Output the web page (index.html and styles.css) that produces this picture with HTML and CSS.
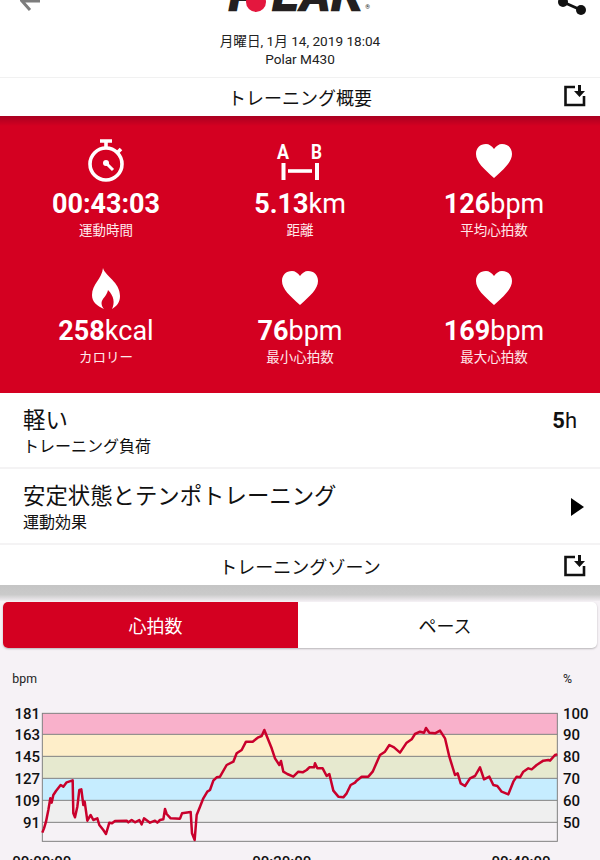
FILE: index.html
```html
<!DOCTYPE html>
<html>
<head>
    <meta charset="utf-8">
    <title>Polar Flow</title>
    <link rel="stylesheet" href="styles.css">
</head>
<body>
    <div class="topbar">
        <svg class="back" width="24" height="12" viewBox="0 0 24 12">
            <path d="M10 10 L2 1 H20" fill="none" stroke="#7d7d7d" stroke-width="3"/>
        </svg>
        <div class="logo">
            <span class="logo-text logo-p">P</span><span class="logo-dot"></span><span class="logo-text">LAR</span><span class="logo-reg">®</span>
        </div>
        <svg class="share" width="32" height="18" viewBox="0 0 32 18">
            <path d="M8 2 L26 10" stroke="#111" stroke-width="3"/>
            <circle cx="8" cy="2" r="5" fill="#111"/>
            <circle cx="26" cy="10" r="5" fill="#111"/>
        </svg>
    </div>

    <div class="meta">
        <p>月曜日, 1月 14, 2019 18:04</p>
        <p>Polar M430</p>
    </div>

    <div class="section-title">
        <span>トレーニング概要</span>
        <svg class="save" width="24" height="22" viewBox="0 0 24 22">
            <path d="M13 2 H3.500 V20 H22 V11" fill="none" stroke="#111" stroke-width="2.6"/>
            <path d="M16 0 H19 V6 H23 L17.500 12 L12 6 H16 Z" fill="#111"/>
        </svg>
    </div>

    <div class="stats">
        <div class="stat">
            <div class="stat-icon">
                <svg width="38" height="44" viewBox="0 0 38 44">
                    <circle cx="19" cy="25" r="16" fill="none" stroke="#fff" stroke-width="3.600"/>
                    <path d="M13 2 H25 M19 2 V9 M31 13 L34 10" stroke="#fff" stroke-width="3.600" fill="none"/>
                    <circle cx="19" cy="24" r="3" fill="#fff"/>
                    <path d="M19 24 L26 31" stroke="#fff" stroke-width="3"/>
                </svg>
            </div>
            <div class="stat-value"><b>00:43:03</b></div>
            <div class="stat-label">運動時間</div>
        </div>
        <div class="stat">
            <div class="stat-icon">
                <svg width="48" height="44" viewBox="0 0 48 44">
                    <text class="ab-text" x="1" y="20" textLength="12" lengthAdjust="spacingAndGlyphs">A</text>
                    <text class="ab-text" x="35" y="20" textLength="11" lengthAdjust="spacingAndGlyphs">B</text>
                    <path d="M7.500 24 V41 M41 24 V41" stroke="#fff" stroke-width="4"/>
                    <path d="M12 32 H36" stroke="#fff" stroke-width="3.600"/>
                </svg>
            </div>
            <div class="stat-value"><b>5.13</b>km</div>
            <div class="stat-label">距離</div>
        </div>
        <div class="stat">
            <div class="stat-icon">
                <svg class="heart" width="36" height="34" viewBox="0 0 36 34">
                    <path d="M18 34 C8 25 0 18 0 10 C0 4 4 0 10 0 C13 0 16 2 18 5 C20 2 23 0 26 0 C32 0 36 4 36 10 C36 18 28 25 18 34 Z" fill="#fff"/>
                </svg>
            </div>
            <div class="stat-value"><b>126</b>bpm</div>
            <div class="stat-label">平均心拍数</div>
        </div>
        <div class="stat">
            <div class="stat-icon">
                <svg width="28" height="41" viewBox="0 0 28 41">
                    <path d="M11 0 C13 8 28 14 28 28 C28 34 25 38 20 41 C23 35 22 28 16 22 C15 28 10 30 9.500 35 C9.500 38 11 40 12 41 C5 38 0 34 0 27 C0 16 10 11 11 0 Z" fill="#fff"/>
                </svg>
            </div>
            <div class="stat-value"><b>258</b>kcal</div>
            <div class="stat-label">カロリー</div>
        </div>
        <div class="stat">
            <div class="stat-icon">
                <svg class="heart" width="36" height="34" viewBox="0 0 36 34">
                    <path d="M18 34 C8 25 0 18 0 10 C0 4 4 0 10 0 C13 0 16 2 18 5 C20 2 23 0 26 0 C32 0 36 4 36 10 C36 18 28 25 18 34 Z" fill="#fff"/>
                </svg>
            </div>
            <div class="stat-value"><b>76</b>bpm</div>
            <div class="stat-label">最小心拍数</div>
        </div>
        <div class="stat">
            <div class="stat-icon">
                <svg class="heart" width="36" height="34" viewBox="0 0 36 34">
                    <path d="M18 34 C8 25 0 18 0 10 C0 4 4 0 10 0 C13 0 16 2 18 5 C20 2 23 0 26 0 C32 0 36 4 36 10 C36 18 28 25 18 34 Z" fill="#fff"/>
                </svg>
            </div>
            <div class="stat-value"><b>169</b>bpm</div>
            <div class="stat-label">最大心拍数</div>
        </div>
    </div>

    <div class="row">
        <div class="row-text">
            <div class="row-title">軽い</div>
            <div class="row-sub">トレーニング負荷</div>
        </div>
        <div class="row-value"><b>5</b>h</div>
    </div>
    <div class="row">
        <div class="row-text">
            <div class="row-title">安定状態とテンポトレーニング</div>
            <div class="row-sub">運動効果</div>
        </div>
        <div class="row-arrow"></div>
    </div>

    <div class="section-title">
        <span>トレーニングゾーン</span>
        <svg class="save" width="24" height="22" viewBox="0 0 24 22">
            <path d="M13 2 H3.500 V20 H22 V11" fill="none" stroke="#111" stroke-width="2.6"/>
            <path d="M16 0 H19 V6 H23 L17.500 12 L12 6 H16 Z" fill="#111"/>
        </svg>
    </div>
    <div class="shade"></div>

    <div class="tabs">
        <div class="tab active">心拍数</div>
        <div class="tab">ペース</div>
    </div>

    <!-- 1 px = 3 units here -->
    <svg class="chart" width="600" height="200" viewBox="0 0 1800 600">
        <rect x="127" y="160" width="1545" height="63" fill="#f9b1cb"/>
        <rect x="127" y="223" width="1545" height="66" fill="#feeec9"/>
        <rect x="127" y="289" width="1545" height="66" fill="#e6e9cf"/>
        <rect x="127" y="355" width="1545" height="66" fill="#c6edff"/>
        <rect x="127" y="421" width="1545" height="66" fill="#efefef"/>
        <path class="grid" d="M127 223 H1672 M127 289 H1672 M127 355 H1672 M127 421 H1672 M127 487 H1672"/>
        <rect class="grid" x="127" y="160" width="1545" height="384"/>
        <polyline class="hr-line" points="127,518 132,505 138,485 145,450 151,415 155,428 160,405 168,393 182,375 190,380 200,367 218,361 220,460 225,472 232,440 238,390 244,388 250,435 254,425 262,482 272,465 280,480 292,475 298,495 310,510 318,522 328,488 336,490 345,483 380,482 385,487 395,480 405,487 418,480 425,493 432,475 450,488 465,482 472,488 480,480 490,478 495,447 500,462 512,475 540,476 546,460 572,456 576,520 584,540 590,465 600,440 610,415 622,395 630,390 640,362 650,352 660,350 680,315 700,305 710,280 725,270 738,245 758,245 775,232 785,228 793,210 805,240 815,265 825,295 838,315 843,303 850,335 862,342 880,350 895,335 908,337 920,330 928,322 942,322 945,310 952,325 968,325 980,348 988,342 1000,392 1015,410 1030,412 1040,400 1052,375 1065,368 1070,362 1085,350 1105,350 1118,335 1140,285 1155,275 1168,255 1182,262 1200,278 1220,248 1235,238 1245,222 1260,215 1272,218 1278,204 1288,218 1305,220 1320,212 1335,235 1348,290 1365,345 1373,340 1382,370 1395,378 1410,355 1425,348 1440,322 1452,358 1468,350 1480,375 1492,378 1505,395 1525,403 1540,365 1550,350 1560,352 1570,335 1585,325 1595,328 1610,315 1630,302 1645,300 1650,302 1665,285 1672,283"/>
        <text class="unit" x="37" y="68">bpm</text>
        <text class="unit" x="1689" y="68">%</text>
        <g class="axis" text-anchor="end">
            <text x="120" y="177">181</text>
            <text x="120" y="241">163</text>
            <text x="120" y="307">145</text>
            <text x="120" y="373">127</text>
            <text x="120" y="439">109</text>
            <text x="120" y="503">91</text>
        </g>
        <g class="axis">
            <text x="1689" y="177">100</text>
            <text x="1689" y="241">90</text>
            <text x="1689" y="307">80</text>
            <text x="1689" y="373">70</text>
            <text x="1689" y="439">60</text>
            <text x="1689" y="503">50</text>
        </g>
        <g class="axis" text-anchor="middle">
            <text x="125" y="621">00:00:00</text>
            <text x="845" y="621">00:20:00</text>
            <text x="1563" y="621">00:40:00</text>
        </g>
    </svg>
</body>
</html>
```

FILE: styles.css
```css
html, body {
    margin: 0;
    padding: 0;
}

body {
    width: 600px;
    height: 860px;
    overflow: hidden;
    background-color: #f6f2f6;
    font-family: Roboto, "Noto Sans CJK JP", sans-serif;
    color: #111;
}

svg {
    display: block;
}

p {
    margin: 0;
}

.topbar {
    display: flex;
    justify-content: space-between;
    align-items: flex-end;
    height: 30px;
    padding: 0 13px 0 20px;
    background-color: #fff;
}

.back {
    margin-bottom: 18px;
}

.share {
    margin-bottom: 12px;
}

.logo {
    display: flex;
    align-items: flex-end;
    margin-bottom: 18px;
    height: 40px;
}

.logo-text {
    font-family: "Liberation Sans", sans-serif;
    font-size: 42px;
    font-weight: bold;
    font-style: italic;
    line-height: 32px;
    letter-spacing: 1.500px;
    color: #231f20;
    -webkit-text-stroke: 2.500px #231f20;
}

.logo-p {
    margin-right: -12px;
}

.logo-dot {
    position: relative;
    width: 20px;
    height: 20px;
    margin-right: 6px;
    border-radius: 50%;
    background-color: #e4173e;
}

.logo-reg {
    font-size: 6px;
    line-height: 10px;
    margin-left: 2px;
}

.meta {
    height: 47px;
    background-color: #fff;
    text-align: center;
    font-size: 13.600px;
    line-height: 18px;
    color: #222;
    padding-top: 2px;
    box-sizing: border-box;
}

.section-title {
    position: relative;
    display: flex;
    justify-content: center;
    align-items: center;
    height: 39px;
    box-sizing: border-box;
    border-top: 1px solid #f1f1f1;
    background-color: #fff;
    font-size: 18px;
}

.save {
    position: absolute;
    right: 14px;
    top: 7px;
}

.stats {
    display: grid;
    grid-template-columns: repeat(3, 194px);
    grid-auto-rows: 127px;
    height: 277px;
    box-sizing: border-box;
    padding: 23px 9px 0;
    background: linear-gradient(#a90021, #d40021 10px);
    color: #fff;
    text-align: center;
}

.stat-icon {
    display: flex;
    justify-content: center;
    align-items: center;
    height: 44px;
}

.ab-text {
    font-size: 20px;
    font-weight: bold;
    fill: #fff;
}

.stat-value {
    margin-top: 4px;
    font-size: 27px;
    line-height: 34px;
}

.stat-value b {
    font-weight: 700;
}

.stat-label {
    margin-top: -1px;
    font-size: 13.500px;
    line-height: 20px;
    color: #ffe9ec;
}

.row {
    display: flex;
    justify-content: space-between;
    align-items: center;
    height: 76px;
    box-sizing: border-box;
    padding: 0 23px;
    border-bottom: 2px solid #f4f3f4;
    background-color: #fff;
}

.row-text {
    padding-top: 3px;
}

.row-title {
    font-size: 22.400px;
    line-height: 30px;
}

.row-sub {
    font-size: 16px;
    line-height: 23px;
}

.row-value {
    align-self: flex-start;
    margin-top: 14px;
    font-size: 22px;
    line-height: 28px;
}

.row-arrow {
    width: 0;
    height: 0;
    border-left: 13px solid #000;
    border-top: 9px solid transparent;
    border-bottom: 9px solid transparent;
    margin: 2px -7px 0 0;
}

.row + .section-title {
    height: 40px;
    padding-top: 2px;
    border-top: none;
}

.row + .section-title .save {
    top: 10px;
}

.shade {
    height: 16px;
    background: linear-gradient(#c5c5c5, #cacaca 60%, #f0ecf0);
}

.tabs {
    display: grid;
    grid-template-columns: 295px 1fr;
    height: 46px;
    margin: 1px 3px 12px;
    border-radius: 5px;
    overflow: hidden;
    background-color: #fff;
    box-shadow: 0 1px 2px rgba(0, 0, 0, 0.25);
}

.tab {
    display: flex;
    justify-content: center;
    align-items: center;
    padding-right: 5px;
    font-size: 18px;
}

.tab.active {
    padding: 0 0 0 10px;
    background-color: #d40021;
    color: #fff;
}

.grid {
    fill: none;
    stroke: #808080;
    stroke-width: 3;
}

.hr-line {
    fill: none;
    stroke: #c9002c;
    stroke-width: 7.500;
    stroke-linejoin: round;
}

.unit {
    font-size: 37px;
    fill: #222;
}

.axis {
    font-size: 45px;
    font-weight: 500;
    fill: #111;
}
```
